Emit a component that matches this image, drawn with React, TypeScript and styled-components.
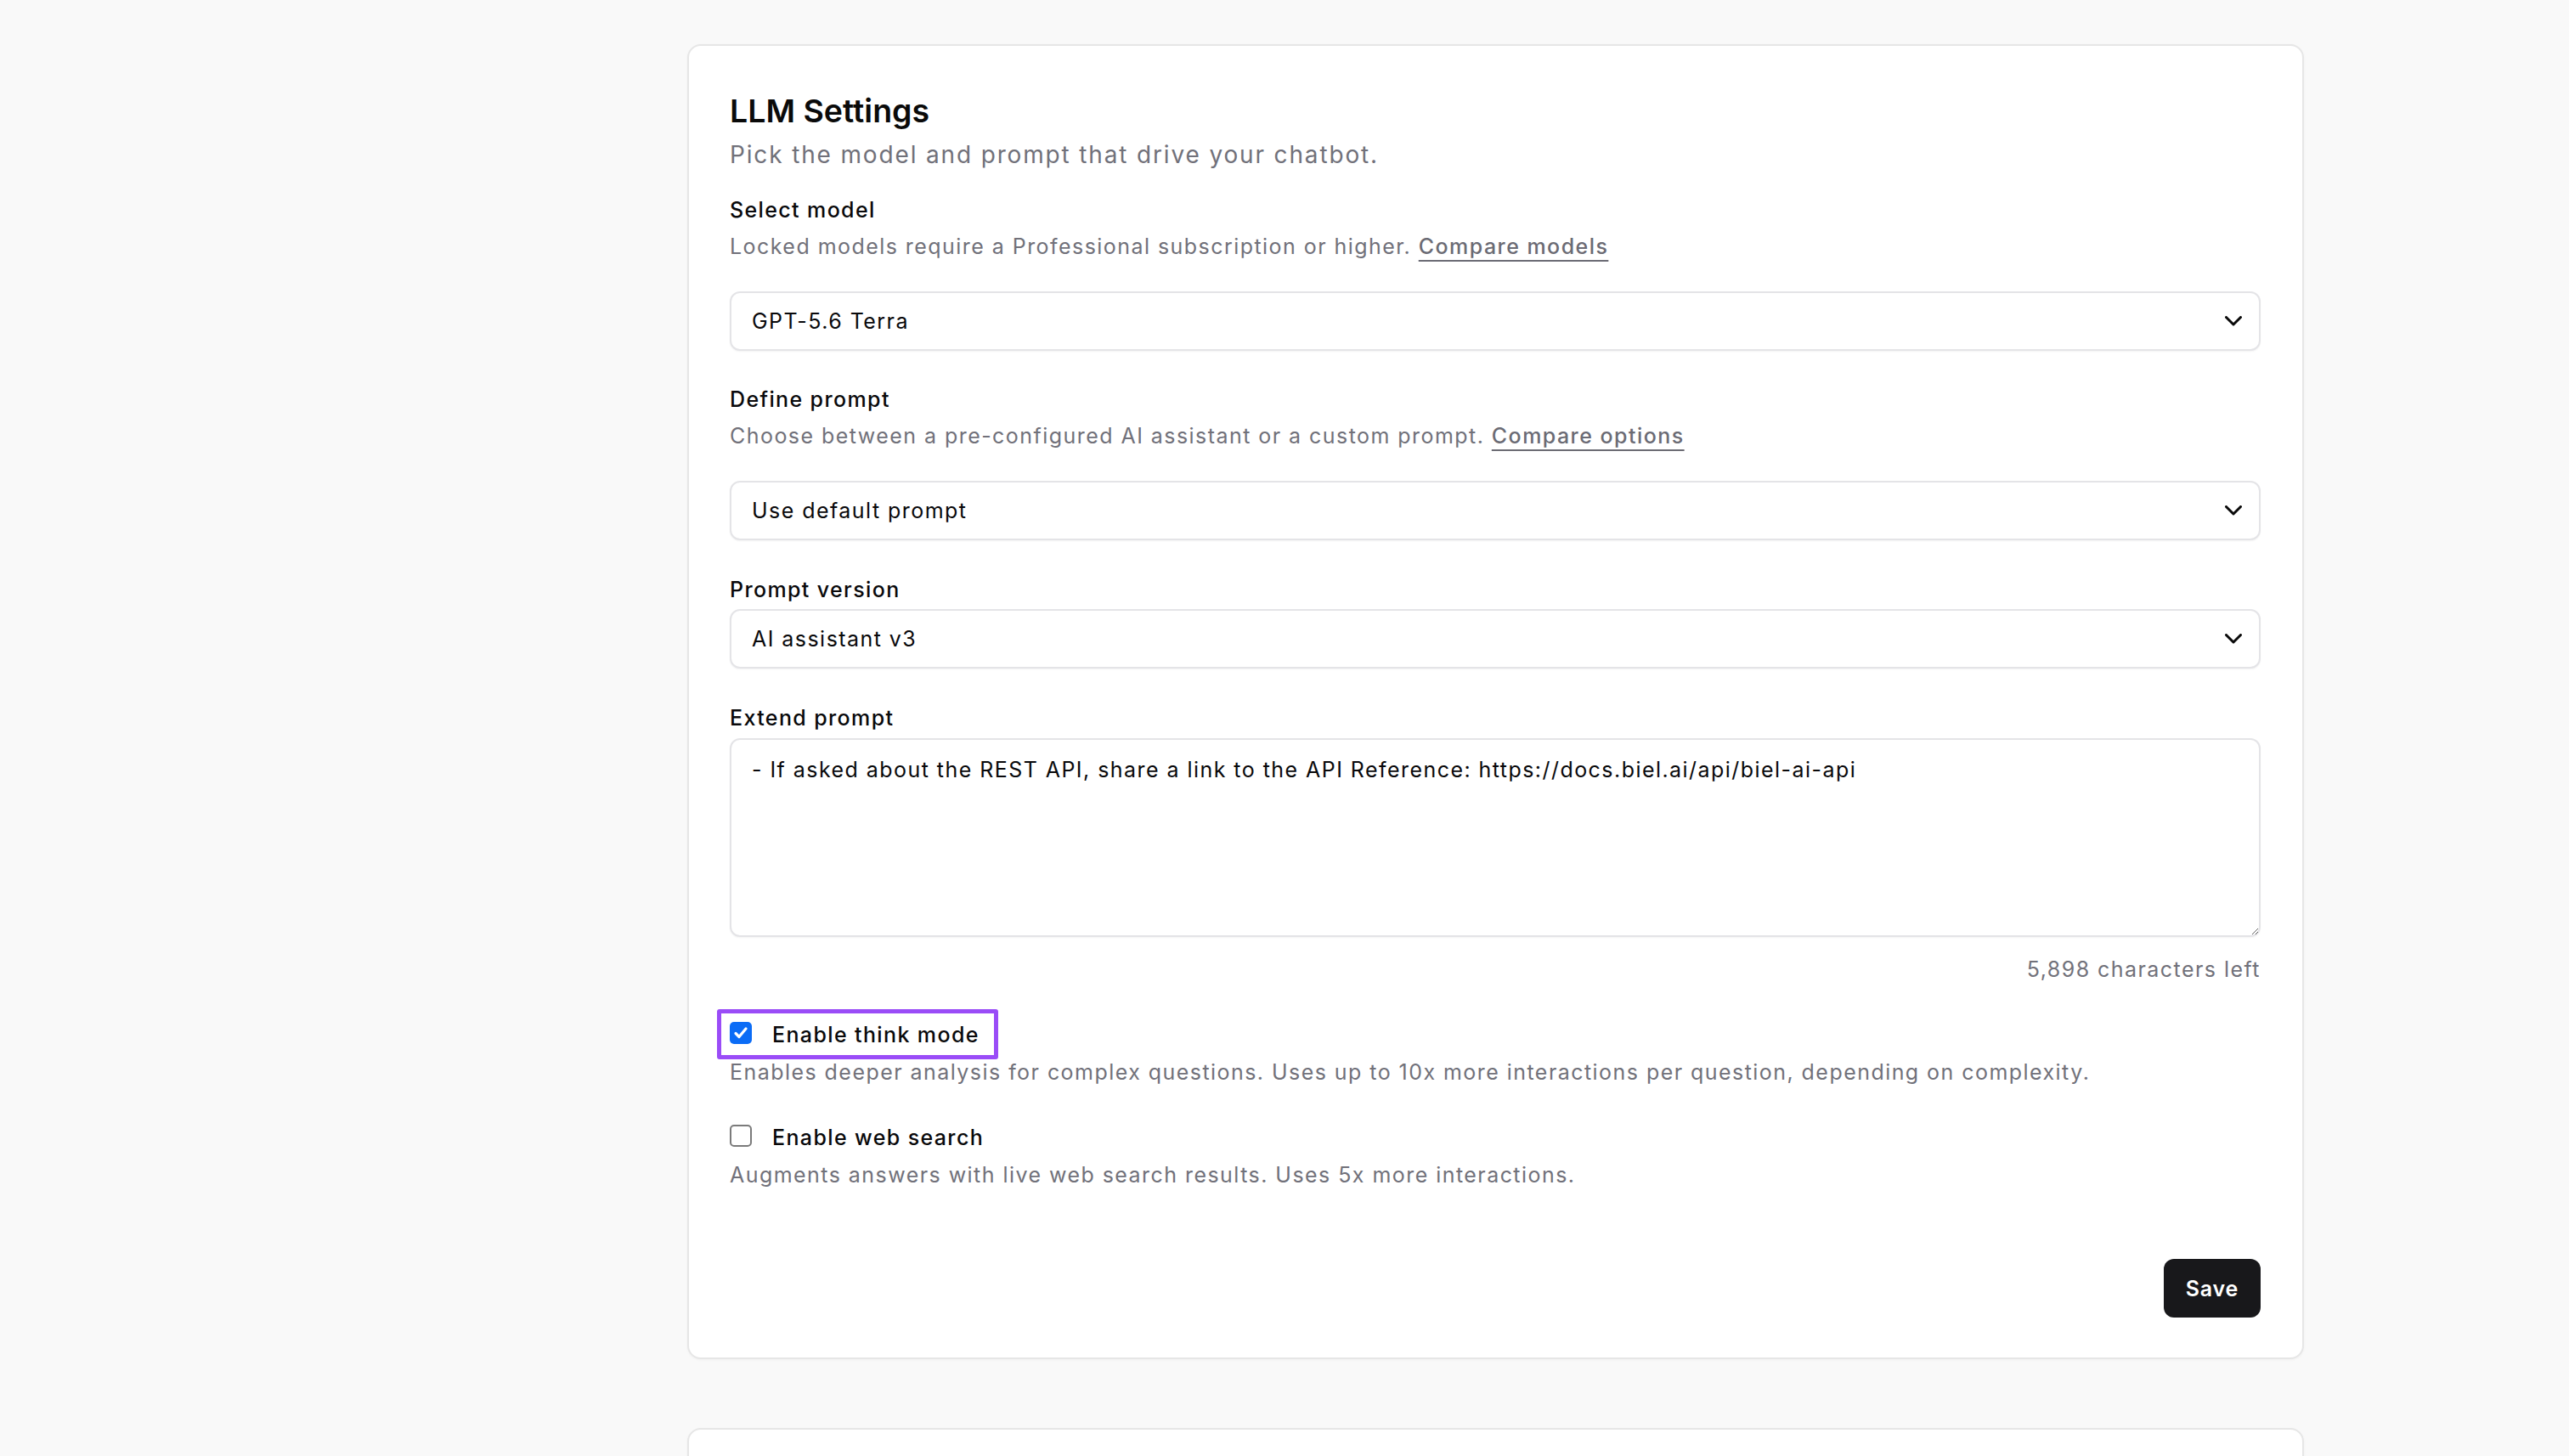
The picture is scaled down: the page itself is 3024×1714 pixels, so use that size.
import React from "react";
import styled, { createGlobalStyle } from "styled-components";

const GlobalStyle = createGlobalStyle`
  html, body {
    margin: 0;
    padding: 0;
    background: #f9f9f9;
    font-family: Inter, "Noto Sans", "Liberation Sans", sans-serif;
    color: #09090b;
  }
  * {
    box-sizing: border-box;
  }
`;

const Page = styled.main`
  display: flex;
  flex-direction: column;
  gap: 81px;
  padding: 52px 0 0 809px;
  min-height: 100vh;
  overflow: hidden;
`;

const Card = styled.section<{ $stub?: boolean }>`
  width: 1903px;
  background: #ffffff;
  border: 2px solid #e6e6e6;
  border-radius: 16px;
  box-shadow: 0 1px 3px rgba(0, 0, 0, 0.04);
  padding: 52px 49px 47px 48px;
  height: ${p => (p.$stub ? "200px" : "auto")};
  display: flex;
  flex-direction: column;
`;

const Title = styled.h2`
  margin: 0;
  font-size: 37.5px;
  line-height: 50px;
  font-weight: 600;
  letter-spacing: 0;
  color: #0a0a0a;
`;

const Subtitle = styled.p`
  margin: 5px 0 0;
  font-size: 28px;
  line-height: 43.75px;
  letter-spacing: 0.066em;
  color: #71717a;
`;

const Field = styled.div<{ $gap: number }>`
  margin-top: ${p => p.$gap}px;
  display: flex;
  flex-direction: column;
`;

const Label = styled.label`
  font-size: 25px;
  line-height: 37.5px;
  font-weight: 500;
  letter-spacing: 0.055em;
  color: #09090b;
`;

const Hint = styled.p<{ $top?: number }>`
  margin: ${p => p.$top ?? 6}px 0 0;
  font-size: 25px;
  line-height: 37.5px;
  letter-spacing: 0.058em;
  color: #71717a;
`;

const HintLink = styled.a`
  color: #6b6b74;
  font-weight: 500;
  text-decoration: underline;
  text-decoration-thickness: 2px;
  text-underline-offset: 7px;
  text-decoration-color: #6b6b74;
  cursor: pointer;
`;

const SelectBox = styled.div<{ $top: number }>`
  margin-top: ${p => p.$top}px;
  height: 70px;
  border: 2px solid #e4e4e7;
  border-radius: 12px;
  background: #ffffff;
  box-shadow: 0 1px 2px rgba(0, 0, 0, 0.05);
  display: flex;
  align-items: center;
  justify-content: space-between;
  padding: 0 20px 0 24px;
  font-size: 25px;
  letter-spacing: 0.058em;
  color: #09090b;
  cursor: pointer;
`;

const Chevron = () => (
  <svg width="20" height="12" viewBox="0 0 20 12" fill="none">
    <path
      d="M1.5 1.5 L10 10 L18.5 1.5"
      stroke="#0a0a0a"
      strokeWidth="3"
      strokeLinecap="round"
      strokeLinejoin="round"
    />
  </svg>
);

const PromptArea = styled.textarea`
  margin-top: 4px;
  height: 234px;
  width: 100%;
  border: 2px solid #e4e4e7;
  border-radius: 12px;
  box-shadow: 0 1px 2px rgba(0, 0, 0, 0.05);
  padding: 17px 24px;
  font-family: inherit;
  font-size: 25px;
  line-height: 37.5px;
  letter-spacing: 0.058em;
  color: #09090b;
  resize: vertical;
  outline: none;
`;

const Counter = styled.div`
  margin-top: 20px;
  text-align: right;
  font-size: 25px;
  line-height: 37.5px;
  letter-spacing: 0.058em;
  color: #71717a;
`;

const Option = styled.div<{ $gap: number }>`
  margin-top: ${p => p.$gap}px;
  display: flex;
  flex-direction: column;
  align-items: flex-start;
`;

const CheckRow = styled.label<{ $highlight?: boolean }>`
  position: relative;
  display: inline-flex;
  align-items: flex-start;
  gap: 24px;
  font-size: 25px;
  line-height: 37.5px;
  font-weight: 500;
  letter-spacing: 0.055em;
  color: #09090b;
  cursor: pointer;

  &::after {
    content: "";
    display: ${p => (p.$highlight ? "block" : "none")};
    position: absolute;
    inset: -12px -22px -9px -15px;
    border: 5px solid #9a4cf7;
    border-radius: 3px;
    pointer-events: none;
  }
`;

const Box = styled.span<{ $checked: boolean }>`
  margin-top: 3px;
  width: 26px;
  height: 26px;
  flex: none;
  border-radius: 5px;
  display: flex;
  align-items: center;
  justify-content: center;
  background: ${p => (p.$checked ? "#0b6cf6" : "#ffffff")};
  border: ${p => (p.$checked ? "none" : "2px solid #7b7b7b")};
`;

const Tick = () => (
  <svg width="18" height="16" viewBox="0 0 18 16" fill="none">
    <path
      d="M3 8.5 L7 12.5 L15 3"
      stroke="#ffffff"
      strokeWidth="3.2"
      strokeLinecap="round"
      strokeLinejoin="round"
    />
  </svg>
);

const Footer = styled.div`
  margin-top: 80px;
  display: flex;
  justify-content: flex-end;
`;

const SaveButton = styled.button`
  height: 69px;
  padding: 0 26px;
  border: none;
  border-radius: 12px;
  background: #18181b;
  color: #ffffff;
  font-family: inherit;
  font-size: 25px;
  font-weight: 600;
  letter-spacing: 0.03em;
  cursor: pointer;
`;

interface CheckOptionProps {
  label: string;
  hint: string;
  checked: boolean;
  highlight?: boolean;
  gap: number;
}

const CheckOption = ({ label, hint, checked, highlight, gap }: CheckOptionProps) => (
  <Option $gap={gap}>
    <CheckRow $highlight={highlight}>
      <Box $checked={checked}>{checked && <Tick />}</Box>
      {label}
    </CheckRow>
    <Hint>{hint}</Hint>
  </Option>
);

export default function App() {
  return (
    <>
      <GlobalStyle />
      <Page>
        <Card>
          <Title>LLM Settings</Title>
          <Subtitle>Pick the model and prompt that drive your chatbot.</Subtitle>

          <Field $gap={24}>
            <Label>Select model</Label>
            <Hint>
              Locked models require a Professional subscription or higher.{" "}
              <HintLink>Compare models</HintLink>
            </Hint>
            <SelectBox $top={33}>
              GPT-5.6 Terra
              <Chevron />
            </SelectBox>
          </Field>

          <Field $gap={39}>
            <Label>Define prompt</Label>
            <Hint>
              Choose between a pre-configured AI assistant or a custom prompt.{" "}
              <HintLink>Compare options</HintLink>
            </Hint>
            <SelectBox $top={33}>
              Use default prompt
              <Chevron />
            </SelectBox>
          </Field>

          <Field $gap={40}>
            <Label>Prompt version</Label>
            <SelectBox $top={4}>
              AI assistant v3
              <Chevron />
            </SelectBox>
          </Field>

          <Field $gap={40}>
            <Label>Extend prompt</Label>
            <PromptArea
              defaultValue="- If asked about the REST API, share a link to the API Reference: https://docs.biel.ai/api/biel-ai-api"
            />
            <Counter>5,898 characters left</Counter>
          </Field>

          <CheckOption
            gap={40}
            checked
            highlight
            label="Enable think mode"
            hint="Enables deeper analysis for complex questions. Uses up to 10x more interactions per question, depending on complexity."
          />
          <CheckOption
            gap={40}
            checked={false}
            label="Enable web search"
            hint="Augments answers with live web search results. Uses 5x more interactions."
          />

          <Footer>
            <SaveButton>Save</SaveButton>
          </Footer>
        </Card>
        <Card $stub />
      </Page>
    </>
  );
}
